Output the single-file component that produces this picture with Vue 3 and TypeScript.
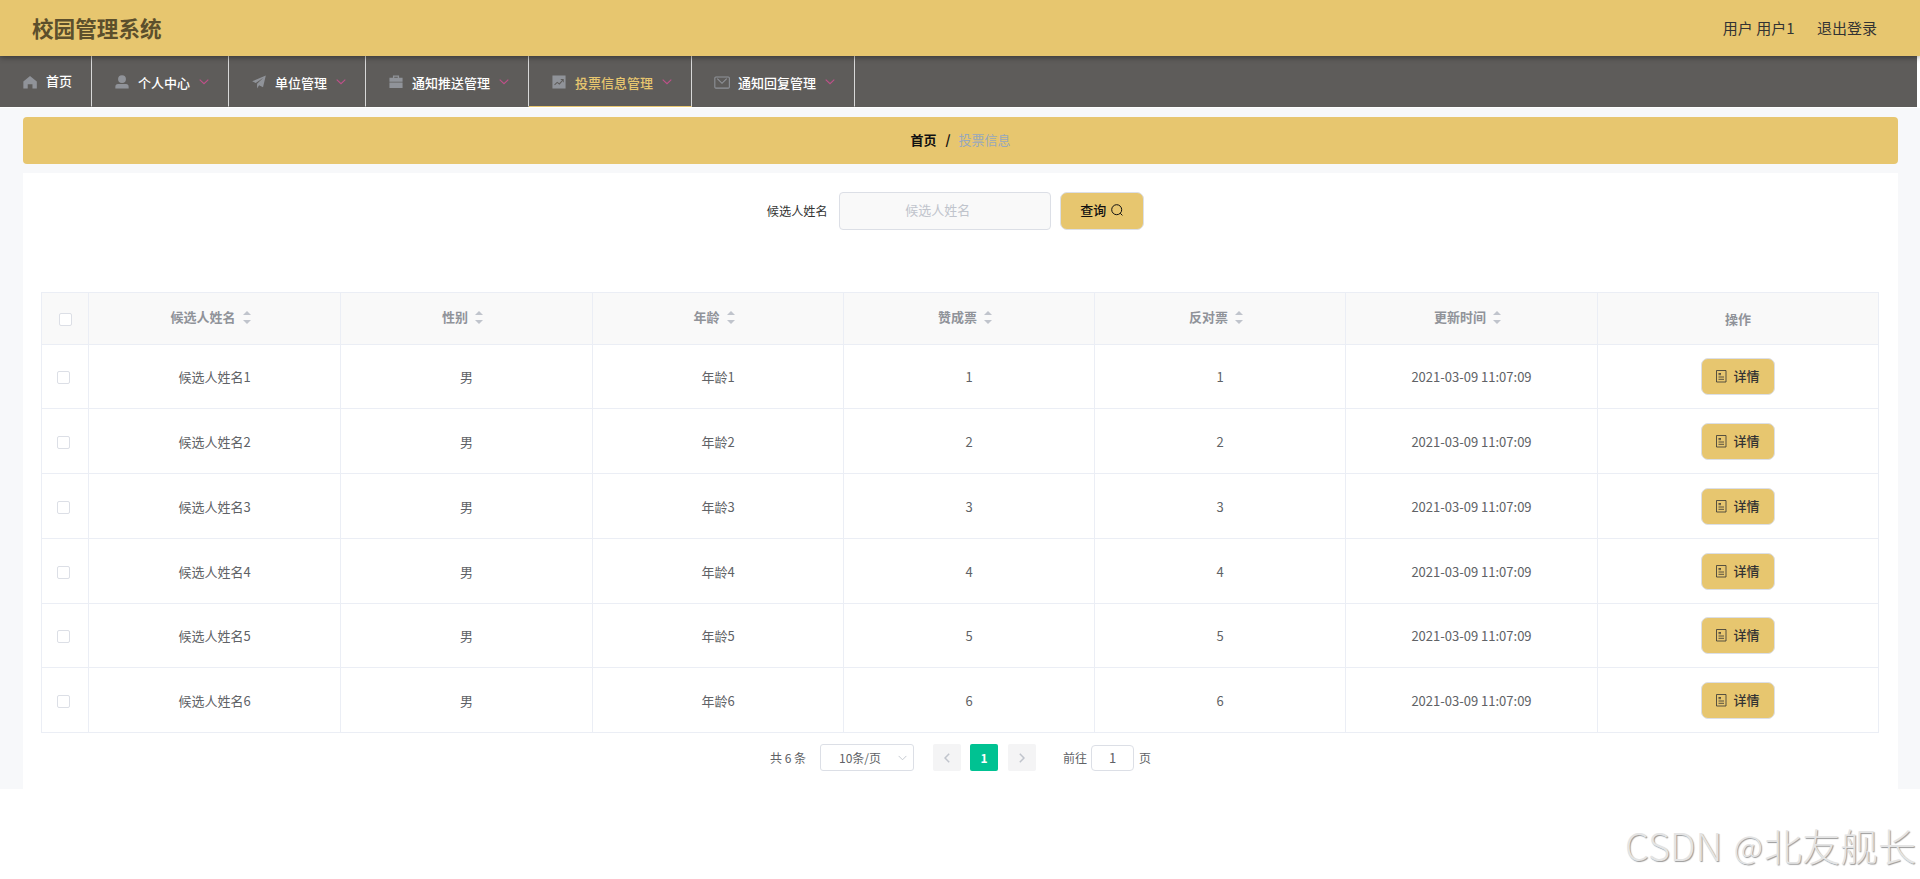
<script setup lang="ts">
interface NavItem { label: string; icon: string; sub: boolean; active?: boolean }
interface Row { id: number; name: string; sex: string; age: string; yes: number; no: number; time: string }

const nav: NavItem[] = [
  { label: '首页', icon: 'home', sub: false },
  { label: '个人中心', icon: 'user', sub: true },
  { label: '单位管理', icon: 'plane', sub: true },
  { label: '通知推送管理', icon: 'case', sub: true },
  { label: '投票信息管理', icon: 'chart', sub: true, active: true },
  { label: '通知回复管理', icon: 'mail', sub: true },
]
const columns: string[] = ['候选人姓名', '性别', '年龄', '赞成票', '反对票', '更新时间']
const rows: Row[] = [1, 2, 3, 4, 5, 6].map((n) => ({
  id: n, name: `候选人姓名${n}`, sex: '男', age: `年龄${n}`, yes: n, no: n, time: '2021-03-09 11:07:09',
}))
</script>

<template>
  <div class="page">
    <header class="top">
      <h1>校园管理系统</h1>
      <div class="account"><span>用户 用户1</span><span>退出登录</span></div>
    </header>

    <nav class="nav">
      <a v-for="item in nav" :key="item.label" class="nav-item" :class="{ active: item.active, sub: item.sub }">
        <svg class="nav-icon" viewBox="0 0 16 16">
          <path v-if="item.icon === 'home'" d="M8 1.2 15.8 7.500V15.500h-5v-5H5.400v5H.400V7.500z" />
          <template v-else-if="item.icon === 'user'">
            <circle cx="8" cy="4.700" r="4.500" />
            <path d="M.4 15.500v-2.200a3 3 0 0 1 3-2.900h9.200a3 3 0 0 1 3 2.900v2.200z" />
          </template>
          <path v-else-if="item.icon === 'plane'" d="M15.800.6.2 7.200l4.100 2L13 3.200 5.800 10v5.300l2.300-3.500 4.500 2.100z" />
          <path v-else-if="item.icon === 'case'" fill-rule="evenodd" d="M4.500 3V.6h7V3h4v4.600H.5V3zM6 2v1h4V2zM.5 8.600h15v6.200H.5z" />
          <path v-else-if="item.icon === 'chart'" fill-rule="evenodd" d="M.5.5h15v15H.5zM2.500 10.900l.8.800L6 9l2.500 2 4-4.500v1.700h.9V4.700H10v.9h1.700L8.300 9.500 5.900 7.600z" />
          <g v-else fill="none" stroke="currentColor" stroke-width="1.200">
            <rect x="-.2" y="2.200" width="16.600" height="12.800" rx="1.200" />
            <path d="M2.600 4.200 8 9.500l5.400-5.300" />
          </g>
        </svg>
        <span class="nav-label">{{ item.label }}</span>
        <svg v-if="item.sub" class="nav-arrow" viewBox="0 0 10 6"><path d="m.7.700 4.300 4 4.300-4" /></svg>
      </a>
    </nav>

    <main class="main">
      <div class="crumbs"><b>首页</b><b class="slash">/</b><span>投票信息</span></div>

      <section class="card">
        <form class="search">
          <label>候选人姓名</label>
          <div class="field">候选人姓名</div>
          <button type="button" class="btn query">
            查询
            <svg viewBox="0 0 12 12"><circle cx="5.700" cy="5.700" r="5" /><path d="m9.200 9.200 2.200 2.200" /></svg>
          </button>
        </form>

        <div class="table">
          <div class="tr head">
            <div class="td"><i class="box"></i></div>
            <div v-for="c in columns" :key="c" class="td sortable">
              {{ c }}<span class="sort"><i class="up"></i><i class="down"></i></span>
            </div>
            <div class="td">操作</div>
          </div>
          <div v-for="r in rows" :key="r.id" class="tr">
            <div class="td"><i class="box"></i></div>
            <div class="td">{{ r.name }}</div>
            <div class="td">{{ r.sex }}</div>
            <div class="td">{{ r.age }}</div>
            <div class="td">{{ r.yes }}</div>
            <div class="td">{{ r.no }}</div>
            <div class="td">{{ r.time }}</div>
            <div class="td">
              <button type="button" class="btn detail">
                <svg viewBox="0 0 11 13"><path d="M.5.500h9.500v11.500H.5zM2.500 3.500h2.500M2.500 4.700h2.500M2.500 7h5.500M2.500 9.300h5.500" /></svg>
                详情
              </button>
            </div>
          </div>
        </div>

        <div class="pager">
          <span class="total">共 6 条</span>
          <div class="size">10条/页<svg viewBox="0 0 10 6"><path d="m.7.700 4.300 4.300L9.300.700" /></svg></div>
          <div class="step"><svg viewBox="0 0 6 10"><path d="M5.200.700 1 5l4.200 4.300" /></svg></div>
          <div class="step current">1</div>
          <div class="step"><svg viewBox="0 0 6 10"><path d="M.8.700 5 5 .8 9.300" /></svg></div>
          <span class="goto">前往</span>
          <div class="jump">1</div>
          <span class="unit">页</span>
        </div>
      </section>
    </main>

    <div class="watermark">CSDN <span class="at">@</span>北友舰长</div>
  </div>
</template>

<style>
body { background: #fff; overflow: hidden; }
</style>

<style scoped>
* { box-sizing: border-box; }
.page {
  position: relative; width: 1920px; height: 879px; overflow: hidden; background: #fff;
  font-family: "Noto Sans CJK SC", "Noto Sans", sans-serif; font-size: 13px; line-height: 20px; color: #606266;
}
.top {
  position: relative; z-index: 1; height: 56px; padding: 0 43px 0 32px; background: #e7c66f;
  display: flex; align-items: center; justify-content: space-between;
  box-shadow: 0 1px 6px rgba(0, 0, 0, .45);
}
h1 { margin: 0; font-size: 21.600px; line-height: 30px; font-weight: 700; color: #5c4f2c; }
.account { display: flex; gap: 22.500px; font-size: 15px; color: #333; }
.nav { display: flex; width: 1917px; height: 51px; background: #5e5c5a; color: #fff; }
.nav-item {
  display: flex; align-items: center; padding: 0 19px 0 23px; border-right: 1px solid #d8d8d8;
  font-weight: 500; border-bottom: 1px solid transparent; background-clip: padding-box;
}
.nav-item.active { color: #e7c66f; border-bottom-color: #e7c66f; }
.nav-icon { width: 14px; height: 14px; margin: 1px 9px 0 0; fill: #909399; color: #909399; overflow: visible; flex: none; }
.nav-label { margin-bottom: 1px; }
.sub .nav-label { margin: 3px 0 0; }
.nav-arrow { width: 10px; height: 6px; margin: 2px 0 0 9px; fill: none; stroke: #c0508a; stroke-width: 1.100; }
.main { margin-top: 1px; padding: 9px 22px 0 23px; height: 681px; background: #f7f8fa; }
.crumbs {
  height: 47px; border-radius: 4px; background: #e7c66f; display: flex; align-items: center; justify-content: center;
  color: #97a8be; padding-bottom: 2px;
}
.crumbs b { color: #111; font-weight: 700; }
.crumbs .slash { margin: 0 8px 0 9px; }
.card { margin-top: 9px; height: 616px; background: #fff; padding: 19px 19px 0 18px; }
.search { display: flex; align-items: center; justify-content: center; height: 38px; margin-left: -9px; }
.search label { font-size: 12.200px; color: #333; margin: 0 11.500px 1px 0; }
.field {
  width: 212px; height: 38px; border: 1px solid #dcdfe6; border-radius: 4px; background: #f9f9f9;
  color: #c0c4cc; display: flex; align-items: center; padding: 0 0 2px 65px;
}
.btn {
  border: 1px solid #dcdfe6; border-radius: 7px; background: #e7c66f; padding: 0;
  display: flex; align-items: center; justify-content: center; font: inherit; font-weight: 500; color: #111;
}
.btn svg { fill: none; stroke: currentColor; stroke-width: 1; }
.query { width: 84px; height: 38px; margin-left: 9px; gap: 5px; padding: 0 1px 2px 0; }
.query svg { width: 12px; height: 12px; }
.table { margin-top: 62px; width: 1838px; border: 1px solid #ebeef5; border-bottom: 0; }
.tr { display: grid; grid-template-columns: 47px 252px 252px 251px 251px 251px 252px 280px; height: 65px; }
.tr:nth-child(2), .tr:nth-child(6) { height: 64px; }
.tr.head { height: 52px; background: #f9f9f9; color: #909399; font-weight: 700; }
.td { display: flex; align-items: center; justify-content: center; border-right: 1px solid #ebeef5; border-bottom: 1px solid #ebeef5; padding-top: 1px; }
.td:last-child { border-right: 0; }
.head .td { padding-top: 1px; }
.head .sortable { padding: 0 8px 4px 0; }
.box { width: 13px; height: 13px; border: 1px solid #dcdfe6; border-radius: 2px; background: #fff; margin: 1px 3px 0 0; }
.head .box { margin: 1px 0 0 1px; }
.sort { display: flex; flex-direction: column; gap: 5px; margin: 1px 0 0 7px; }
.sort i { border: 4px solid transparent; }
.sort .up { border-top: 0; border-bottom-color: #c0c4cc; }
.sort .down { border-bottom: 0; border-top-color: #c0c4cc; }
.detail { width: 74px; height: 37px; gap: 6px; color: #333; margin: 0 1px 1px 0; padding: 0 0 1px 1px; }
.detail svg { width: 11px; height: 13px; margin-top: 1px; stroke-width: .800; }
.pager { display: flex; align-items: center; height: 27px; margin: 11px 0 0 729px; font-size: 12px; }
.total { width: 50px; }
.size { width: 94px; height: 27px; border: 1px solid #dcdfe6; border-radius: 3px; display: flex; align-items: center; padding: 0 6px 0 18px; justify-content: space-between; }
.pager svg { fill: none; stroke: #c0c4cc; }
.size svg { width: 9px; height: 6px; }
.step { width: 28px; height: 27px; margin-left: 9px; border-radius: 2px; background: #f4f4f5; display: flex; align-items: center; justify-content: center; }
.size + .step { margin-left: 19px; }
.step + .step + .step { margin-left: 10px; }
.step svg { width: 6px; height: 10px; stroke-width: 1.500; }
.step.current { background: #00c292; color: #fff; font-weight: 700; }
.goto { margin-left: 27px; }
.jump { width: 43px; height: 26px; margin: 1px 5px 0 4px; border: 1px solid #dcdfe6; border-radius: 4px; text-align: center; line-height: 23px; font-size: 13px; }
.watermark {
  position: absolute; right: 4px; top: 817px; font-size: 38px; line-height: 56px; font-weight: 300; white-space: nowrap;
  color: #e4e4e4; text-shadow: 1px 1px 1px #999;
}
.at { font-size: 32px; margin: 0 1px 0 3px; vertical-align: 2px; }
</style>
